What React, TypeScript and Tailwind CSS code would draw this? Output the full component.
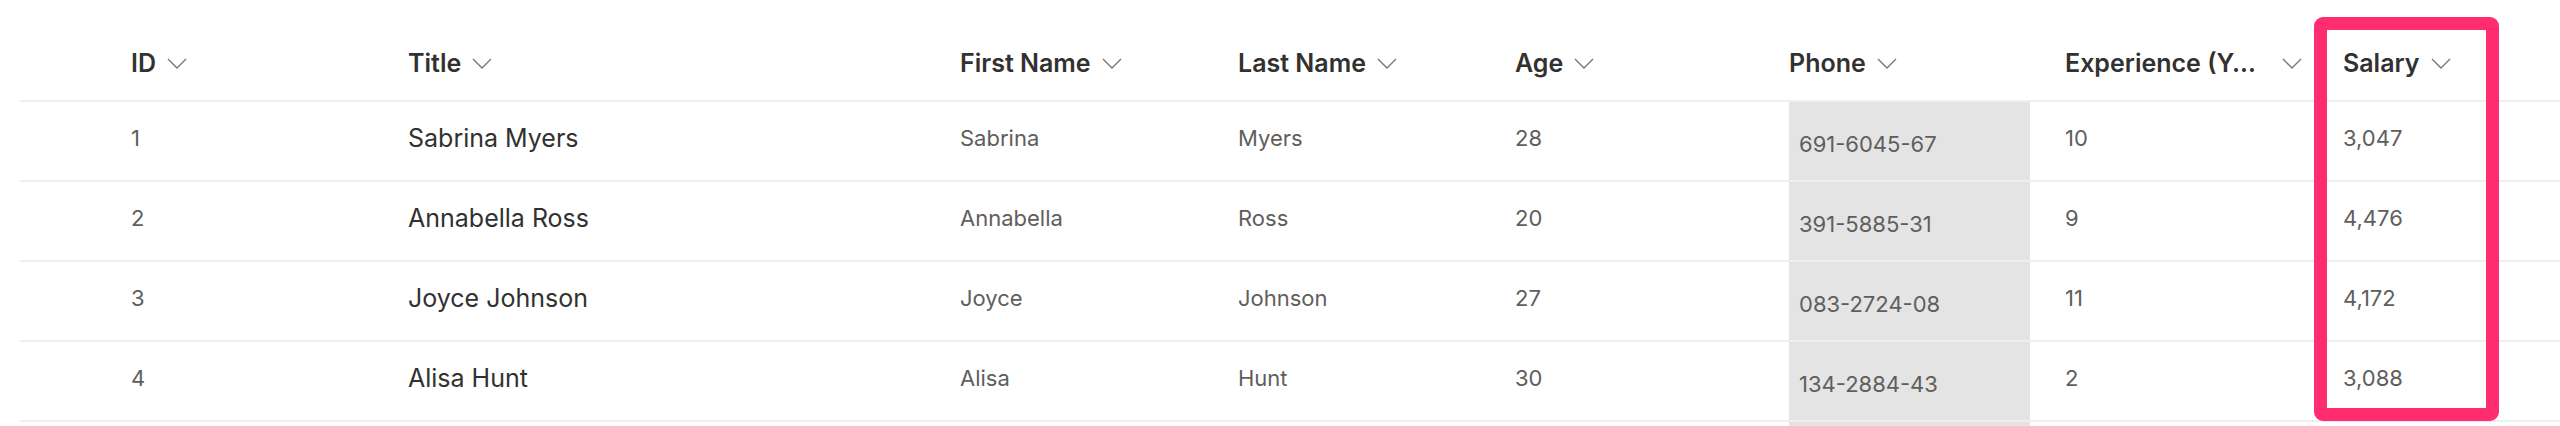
// 목록 보기 (SharePoint 스타일) - 급여 열 강조 표시

type Row = {
  id: string;
  title: string;
  first: string;
  last: string;
  age: string;
  phone: string;
  exp: string;
  salary: string;
};

const rows: Row[] = [
  { id: "1", title: "Sabrina Myers", first: "Sabrina", last: "Myers", age: "28", phone: "691-6045-67", exp: "10", salary: "3,047" },
  { id: "2", title: "Annabella Ross", first: "Annabella", last: "Ross", age: "20", phone: "391-5885-31", exp: "9", salary: "4,476" },
  { id: "3", title: "Joyce Johnson", first: "Joyce", last: "Johnson", age: "27", phone: "083-2724-08", exp: "11", salary: "4,172" },
  { id: "4", title: "Alisa Hunt", first: "Alisa", last: "Hunt", age: "30", phone: "134-2884-43", exp: "2", salary: "3,088" },
  // 다음 줄은 화면 아래로 잘려서 회색 칸 윗부분만 보여요
  { id: "", title: "", first: "", last: "", age: "", phone: "", exp: "", salary: "" },
];

function Chevron() {
  return (
    <svg width="20" height="11" viewBox="0 0 20 11" className="shrink-0">
      <polyline points="1,1 10,10 19,1" fill="none" stroke="#7a7774" strokeWidth="1.4" />
    </svg>
  );
}

function HeaderCell({ label, w }: { label: string; w: string }) {
  return (
    <div className={`flex h-[32px] items-center gap-[11px] ${w}`}>
      <span>{label}</span>
      <Chevron />
    </div>
  );
}

export default function App() {
  return (
    <div className="relative h-[426px] w-[2560px] overflow-hidden bg-white font-['Inter','Liberation_Sans',sans-serif]">
      <div className="ml-[20px]">
        {/* 헤더 */}
        <div className="flex h-[102px] items-start border-b-2 border-[#efefef] pt-[47px] text-[25px] leading-[32px] font-semibold text-[#323130]">
          <div className="w-[111px] shrink-0" />
          <HeaderCell label="ID" w="w-[277px] shrink-0" />
          <HeaderCell label="Title" w="w-[552px] shrink-0" />
          <HeaderCell label="First Name" w="w-[278px] shrink-0" />
          <HeaderCell label="Last Name" w="w-[277px] shrink-0" />
          <HeaderCell label="Age" w="w-[274px] shrink-0" />
          <HeaderCell label="Phone" w="w-[276px] shrink-0" />
          <div className="flex h-[32px] w-[278px] shrink-0 items-center pr-[41px]">
            <span className="w-[200px] truncate">Experience (Years)</span>
            <span className="ml-auto"><Chevron /></span>
          </div>
          <HeaderCell label="Salary" w="flex-1" />
        </div>

        {/* 데이터 줄 */}
        {rows.map((r, i) => (
          <div key={i} className="flex h-[80px] border-b-2 border-[#efefef] text-[22px] leading-[30px] text-[#605e5c]">
            <div className="w-[111px] shrink-0" />
            <div className="w-[277px] shrink-0 pt-[21px]">{r.id}</div>
            <div className="w-[552px] shrink-0 pt-[20px] text-[25px] leading-[32px] text-[#323130]">{r.title}</div>
            <div className="w-[278px] shrink-0 pt-[21px]">{r.first}</div>
            <div className="w-[277px] shrink-0 pt-[21px]">{r.last}</div>
            <div className="w-[274px] shrink-0 pt-[21px]">{r.age}</div>
            <div className="w-[276px] shrink-0">
              <div className="h-full w-[241px] bg-[#e4e4e4] px-[10px] pt-[27px]">{r.phone}</div>
            </div>
            <div className="w-[278px] shrink-0 pt-[21px]">{r.exp}</div>
            <div className="flex-1 pt-[21px]">{r.salary}</div>
          </div>
        ))}
      </div>

      {/* 급여 열 강조 박스 */}
      <div className="absolute left-[2314px] top-[17px] h-[404px] w-[185px] rounded-[9px] border-[13px] border-[#ff2d6f]" />
    </div>
  );
}
